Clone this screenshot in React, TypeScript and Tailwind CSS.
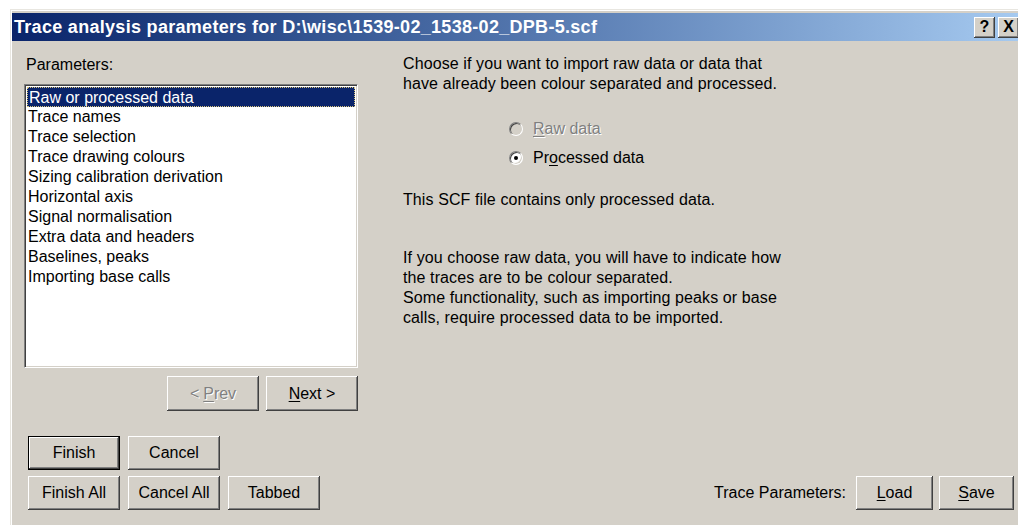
import clsx from "clsx";
import type { ReactNode } from "react";

const items = [
  "Raw or processed data",
  "Trace names",
  "Trace selection",
  "Trace drawing colours",
  "Sizing calibration derivation",
  "Horizontal axis",
  "Signal normalisation",
  "Extra data and headers",
  "Baselines, peaks",
  "Importing base calls",
];

// classic raised 3D edge used by push buttons
const raised =
  "shadow-[inset_-1px_-1px_0_#404040,inset_1px_1px_0_#ffffff,inset_-2px_-2px_0_#808080,inset_2px_2px_0_#d4d0c8]";

function Btn({
  children,
  className,
  isDefault,
  disabled,
}: {
  children: ReactNode;
  className?: string;
  isDefault?: boolean;
  disabled?: boolean;
}) {
  return (
    <button
      type="button"
      className={clsx(
        "flex h-[34px] items-center justify-center bg-[#d4d0c8] text-[16px] leading-none",
        raised,
        isDefault && "border border-black",
        disabled ? "text-[#808080] [text-shadow:1px_1px_0_#ffffff]" : "text-black",
        className
      )}
    >
      {children}
    </button>
  );
}

function Radio({ checked, disabled }: { checked?: boolean; disabled?: boolean }) {
  return (
    <span
      className={clsx(
        "flex h-[14px] w-[14px] items-center justify-center rounded-full border border-t-[#808080] border-l-[#808080] border-r-white border-b-white shadow-[inset_1px_1px_0_#404040,inset_-1px_-1px_0_#d4d0c8]",
        disabled ? "bg-[#d4d0c8]" : "bg-white"
      )}
    >
      {checked && <span className="h-[4px] w-[4px] rounded-full bg-black" />}
    </span>
  );
}

export default function App() {
  return (
    <div className="h-[525px] w-[1018px] overflow-hidden bg-white pl-[10px] pt-[9px] font-['Liberation_Sans',Arial,sans-serif] text-[16px] text-black">
      <div className="flex h-[520px] w-[1014px] flex-col border-l border-t border-[#e8e6e0] bg-[#d4d0c8] pl-[1px] pt-[3px] shadow-[inset_1px_1px_0_#ffffff]">
        {/* title bar */}
        <div className="flex h-[28px] w-[1009px] items-center justify-between bg-linear-to-r from-[#0a246a] to-[#a6caf0] pl-[2px] pr-[2px]">
          <span className="text-[18px] font-bold tracking-[0.3px] text-white">
            Trace analysis parameters for D:\wisc\1539-02_1538-02_DPB-5.scf
          </span>
          <div className="flex items-center gap-[3px]">
            <span className={clsx("flex h-[21px] w-[21px] items-center justify-center bg-[#d4d0c8] text-[16px] font-bold", raised)}>
              ?
            </span>
            <span className={clsx("flex h-[21px] w-[21px] items-center justify-center bg-[#d4d0c8] text-[16px] font-bold", raised)}>
              X
            </span>
          </div>
        </div>

        {/* client area */}
        <div className="flex flex-1 flex-col pl-[12px] pr-[10px] pt-[13px]">
          <div className="flex gap-[45px]">
            <div className="flex w-[334px] flex-col">
              <div className="ml-[2px] mt-[1px] h-[20px] leading-[20px]">Parameters:</div>
              <div className="mt-[9px] h-[284px] border border-t-[#808080] border-l-[#808080] border-r-white border-b-white bg-white p-[2px] shadow-[inset_1px_1px_0_#404040,inset_-1px_-1px_0_#d4d0c8]">
                {items.map((item, i) => (
                  <div
                    key={item}
                    className={clsx(
                      "h-[20px] whitespace-nowrap pl-[1px] leading-[20px]",
                      i === 0 && "border border-dotted border-[#d8c47c] bg-[#0a246a] pl-0 leading-[18px] text-white"
                    )}
                  >
                    {item}
                  </div>
                ))}
              </div>
              <div className="mt-[8px] flex justify-end gap-[7px]">
                <Btn disabled className="h-[35px] w-[92px]">
                  &lt; <span className="ml-[4px] underline underline-offset-2">P</span>rev
                </Btn>
                <Btn className="h-[35px] w-[92px]">
                  <span className="underline underline-offset-2">N</span>ext &gt;
                </Btn>
              </div>
            </div>

            <div className="flex flex-col">
              <p className="whitespace-nowrap leading-[20px] tracking-[0.1px]">
                Choose if you want to import raw data or data that
                <br />
                have already been colour separated and processed.
              </p>
              <div className="ml-[106px] mt-[25px] flex flex-col gap-[9px]">
                <label className="flex h-[20px] items-center gap-[10px]">
                  <Radio disabled />
                  <span className="text-[#808080] [text-shadow:1px_1px_0_#ffffff]">
                    <span className="underline underline-offset-2">R</span>aw data
                  </span>
                </label>
                <label className="flex h-[20px] items-center gap-[10px]">
                  <Radio checked />
                  <span>
                    Pr<span className="underline underline-offset-2">o</span>cessed data
                  </span>
                </label>
              </div>
              <p className="mt-[22px] leading-[20px] tracking-[0.1px]">This SCF file contains only processed data.</p>
              <p className="mt-[38px] whitespace-nowrap leading-[20px] tracking-[0.1px]">
                If you choose raw data, you will have to indicate how
                <br />
                the traces are to be colour separated.
                <br />
                Some functionality, such as importing peaks or base
                <br />
                calls, require processed data to be imported.
              </p>
            </div>
          </div>

          {/* bottom buttons */}
          <div className="mt-[25px] flex items-end justify-between">
            <div className="flex flex-col gap-[6px] pl-[4px]">
              <div className="flex gap-[8px]">
                <Btn isDefault className="w-[92px]">Finish</Btn>
                <Btn className="w-[92px]">Cancel</Btn>
              </div>
              <div className="flex gap-[8px]">
                <Btn className="w-[92px]">Finish All</Btn>
                <Btn className="w-[92px]">Cancel All</Btn>
                <Btn className="w-[92px]">Tabbed</Btn>
              </div>
            </div>
            <div className="flex items-center">
              <span className="mr-[10px]">Trace Parameters:</span>
              <Btn className="w-[77px]">
                <span className="underline underline-offset-2">L</span>oad
              </Btn>
              <Btn className="ml-[6px] w-[75px]">
                <span className="underline underline-offset-2">S</span>ave
              </Btn>
            </div>
          </div>
        </div>
      </div>
    </div>
  );
}
